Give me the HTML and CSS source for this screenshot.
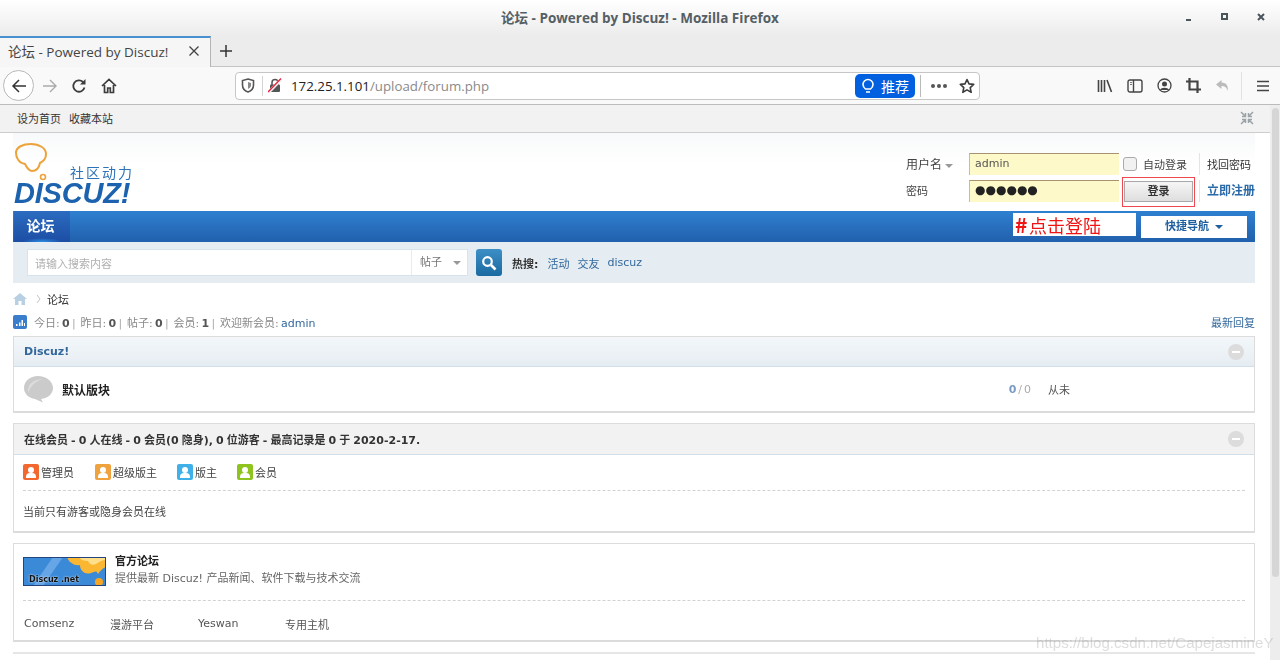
FILE: index.html
```html
<!DOCTYPE html>
<html lang="zh-CN">
<head>
    <meta charset="UTF-8">
    <title>论坛 - Powered by Discuz!</title>
    <link rel="stylesheet" href="styles.css">
</head>
<body>

<div class="titlebar">
    <span class="window-title">论坛 - Powered by Discuz! - Mozilla Firefox</span>
    <div class="window-buttons">
        <svg width="10" height="10" viewBox="0 0 10 10"><path d="M2 8h5" stroke="#4a555c" stroke-width="2"/></svg>
        <svg width="10" height="10" viewBox="0 0 10 10"><rect x="2" y="2" width="5" height="5" fill="none" stroke="#4a555c" stroke-width="2"/></svg>
        <svg width="10" height="10" viewBox="0 0 10 10"><path d="M2 2l6 6M8 2l-6 6" stroke="#4a555c" stroke-width="2"/></svg>
    </div>
</div>

<div class="tabbar">
    <div class="tab">
        <span class="tab-title">论坛 - Powered by Discuz!</span>
        <svg width="12" height="12" viewBox="0 0 12 12"><path d="M1.5 1.5l9 9M10.5 1.5l-9 9" stroke="#444" stroke-width="1.3"/></svg>
    </div>
    <svg class="new-tab" width="14" height="14" viewBox="0 0 14 14"><path d="M7 1v12M1 7h12" stroke="#333" stroke-width="1.5"/></svg>
</div>

<div class="toolbar">
    <div class="back-btn">
        <svg width="18" height="18" viewBox="0 0 18 18"><path d="M16 9H3M9 3L3 9l6 6" fill="none" stroke="#333" stroke-width="1.5"/></svg>
    </div>
    <svg class="nav-icon forward" width="18" height="18" viewBox="0 0 18 18"><path d="M2 9h13M9 3l6 6-6 6" fill="none" stroke="#aaa" stroke-width="1.4"/></svg>
    <svg class="nav-icon reload" width="16" height="16" viewBox="0 0 16 16"><path d="M13.5 9.5A5.7 5.7 0 1 1 12 4" fill="none" stroke="#3c3c3c" stroke-width="1.8"/><path d="M14.5 1v5.5H9z" fill="#3c3c3c"/></svg>
    <svg class="nav-icon home" width="16" height="16" viewBox="0 0 16 16"><path d="M1 8l7-6.500 7 6.500M3.500 7v7.500h3.200V10h2.600v4.500h3.200V7" fill="none" stroke="#3c3c3c" stroke-width="1.7"/></svg>

    <div class="urlbar">
        <svg class="shield" width="14" height="15" viewBox="0 0 14 15"><path d="M7 1l5.500 1.500V7c0 3.500-2.500 6-5.500 7C4 13 1.500 10.500 1.500 7V2.500z" fill="none" stroke="#555" stroke-width="1.6"/><path d="M7 4l3 1v2.500C10 9 8.500 10.200 7 11z" fill="#888"/></svg>
        <span class="url-sep"></span>
        <svg class="lock" width="14" height="15" viewBox="0 0 14 15"><rect x="2" y="6.500" width="10" height="7.500" rx="1" fill="#555"/><path d="M4 7V4.500a3 3 0 0 1 6 0V7" fill="none" stroke="#555" stroke-width="1.500"/><path d="M0.500 14.500L13.500 1" stroke="#f0f0f0" stroke-width="3"/><path d="M0 14L13 0.500" stroke="#e8223c" stroke-width="1.300"/></svg>
        <span class="url-text"><b>172.25.1.101</b>/upload/forum.php</span>
        <div class="suggest">
            <svg width="14" height="16" viewBox="0 0 14 16"><path d="M4.500 11C3 9.800 2 8.500 2 6.500a5 5 0 0 1 10 0c0 2-1 3.300-2.500 4.500zM5 14h4" fill="none" stroke="#fff" stroke-width="1.600"/></svg>
            <span>推荐</span>
        </div>
        <span class="url-sep wide"></span>
        <span class="dots"><i></i><i></i><i></i></span>
        <svg class="star" width="16" height="16" viewBox="0 0 16 16"><path d="M8 1.500l2 4.400 4.700.5-3.500 3.200 1 4.700L8 11.900l-4.200 2.400 1-4.700-3.500-3.200 4.700-.5z" fill="none" stroke="#3c3c3c" stroke-width="1.600" stroke-linejoin="round"/></svg>
    </div>

    <div class="tool-icons">
        <svg width="16" height="14" viewBox="0 0 16 14"><path d="M1.500 1v12M4.500 1v12M7.500 1v12M10 1l4.500 12" stroke="#444" stroke-width="1.600" fill="none"/></svg>
        <svg width="16" height="14" viewBox="0 0 16 14"><rect x="1" y="1" width="14" height="12" rx="2" fill="none" stroke="#444" stroke-width="1.400"/><path d="M6.500 1v12" stroke="#444" stroke-width="1.400"/><path d="M3 3.500h2M3 5.500h2" stroke="#777"/></svg>
        <svg width="15" height="15" viewBox="0 0 15 15"><circle cx="7.500" cy="7.500" r="6.500" fill="none" stroke="#444" stroke-width="1.300"/><circle cx="7.500" cy="6" r="2.500" fill="#444"/><path d="M3 12c1-3 8-3 9 0" fill="#444"/></svg>
        <svg width="15" height="15" viewBox="0 0 15 15"><path d="M3.500 0v11.500H15M0 3.500h11.500V15" fill="none" stroke="#444" stroke-width="2.200"/></svg>
        <svg width="15" height="14" viewBox="0 0 15 14"><path d="M6.500 1L1 5.500 6.500 10V7c3 0 5 1 6 5 1-5-1-8.500-6-8.500z" fill="#bbb"/></svg>
        <span class="tool-sep"></span>
        <svg width="14" height="12" viewBox="0 0 14 12"><path d="M1 1.500h12M1 6h12M1 10.500h12" stroke="#444" stroke-width="1.500"/></svg>
    </div>
</div>

<div class="viewport">
    <div class="page">
        <div class="topbar">
            <span>设为首页</span>
            <span>收藏本站</span>
            <svg class="collapse" width="14" height="14" viewBox="0 0 14 14"><path d="M1 1l4.500 4.500M5.500 2v3.500H2M13 1L8.500 5.500M8.500 2v3.500H12M1 13l4.500-4.500M5.500 12V8.500H2M13 13L8.500 8.500M8.500 12V8.500H12" fill="none" stroke="#9aa4a8" stroke-width="1.500"/></svg>
        </div>

        <div class="wrap">
            <div class="header">
                <div class="logo">
                    <svg class="logo-bubble" width="34" height="38" viewBox="0 0 34 38"><path d="M10 21C4 20 1 15 1 10 1 4 8 1 16 1c8 0 15 4 15 10 0 4-2 7-6 9-1 5-4 8-8 8-3 0-5-3-7-7z" fill="none" stroke="#eda33c" stroke-width="2"/><circle cx="28" cy="34" r="2.500" fill="none" stroke="#eda33c" stroke-width="1.600"/></svg>
                    <span class="logo-slogan">社区动力</span>
                    <span class="logo-name">DISCUZ!</span>
                </div>
                <div class="login">
                    <span class="login-label">用户名 <i class="caret gray"></i></span>
                    <div class="login-input">admin</div>
                    <label class="auto-login"><i class="checkbox"></i>自动登录</label>
                    <span class="login-link">找回密码</span>
                    <span class="login-label pw">密码</span>
                    <div class="login-input dots-input">●●●●●●</div>
                    <div class="login-btn-cell"><span class="login-btn">登录</span></div>
                    <span class="login-link reg">立即注册</span>
                </div>
            </div>

            <div class="nav">
                <span class="nav-active">论坛</span>
                <span class="quick-nav">快捷导航 <i class="caret blue"></i></span>
            </div>

            <div class="search">
                <div class="search-box">
                    <span class="search-hint">请输入搜索内容</span>
                    <span class="search-type">帖子 <i class="caret gray"></i></span>
                </div>
                <div class="search-btn">
                    <svg width="16" height="16" viewBox="0 0 16 16"><circle cx="6.500" cy="6.500" r="4.300" fill="none" stroke="#fff" stroke-width="2.200"/><path d="M10 10l4.500 4.500" stroke="#fff" stroke-width="2.600"/></svg>
                </div>
                <b class="hot">热搜:</b>
                <a>活动</a>
                <a>交友</a>
                <a>discuz</a>
            </div>

            <div class="crumb">
                <svg width="14" height="12" viewBox="0 0 14 12"><path d="M7 0L0 6h2v6h3.500V8h3v4H12V6h2z" fill="#b9d0e2"/></svg>
                <svg class="crumb-sep" width="5" height="10" viewBox="0 0 5 10"><path d="M1 1l3 4-3 4" fill="none" stroke="#c4c4c4"/></svg>
                <span>论坛</span>
            </div>

            <div class="stats">
                <svg width="14" height="14" viewBox="0 0 14 14"><rect width="14" height="14" rx="2" fill="#3a7ecb"/><path d="M3 9h1.500v2H3zM6 7.500h1.500V11H6zM8.500 5H10v6H8.500zM11 8h1v3h-1z" fill="#fff"/></svg>
                <span class="stats-text">今日: <b>0</b> <i>|</i> 昨日: <b>0</b> <i>|</i> 帖子: <b>0</b> <i>|</i> 会员: <b>1</b> <i>|</i> 欢迎新会员: <a>admin</a></span>
                <a class="latest">最新回复</a>
            </div>

            <div class="card forums">
                <div class="card-head blue-head">
                    <span class="forum-cat">Discuz!</span>
                    <i class="fold"></i>
                </div>
                <div class="forum-row">
                    <svg width="31" height="28" viewBox="0 0 31 28"><path d="M15 1C7 1 1 6 1 13c0 6 5 10 11 11l8 3.500-2-3.500c7-1 12-5 12-11C30 6 23 1 15 1z" fill="#cbcbcb"/><path d="M5 18C4 9 11 4 20 4 13 6 8 10 5 18z" fill="#dcdcdc"/></svg>
                    <b class="forum-name">默认版块</b>
                    <span class="forum-count"><em>0</em> / 0</span>
                    <span class="forum-last">从未</span>
                </div>
            </div>

            <div class="card online">
                <div class="card-head gray-head">
                    <b class="online-title">在线会员 - 0 人在线 - 0 会员(0 隐身), 0 位游客 - 最高记录是 0 于 2020-2-17.</b>
                    <i class="fold"></i>
                </div>
                <div class="online-body">
                    <div class="legend">
                        <span class="legend-item w72"><i class="user-icon red"></i>管理员</span>
                        <span class="legend-item w82"><i class="user-icon orange"></i>超级版主</span>
                        <span class="legend-item w60"><i class="user-icon sky"></i>版主</span>
                        <span class="legend-item"><i class="user-icon green"></i>会员</span>
                    </div>
                    <p class="online-note">当前只有游客或隐身会员在线</p>
                </div>
            </div>

            <div class="card friends">
                <div class="friend-main">
                    <div class="friend-logo">
                        <svg width="83" height="29" viewBox="0 0 83 29"><rect width="83" height="29" fill="#3b8ad8"/><path d="M10 29L30 0h10L20 29z" fill="#66a5e6"/><path d="M44 0c2 6 8 9 13 8 0 6 5 10 11 8 4-1 5-3 7 1 2-3 5-6 8-7V0z" fill="#fbb731"/><path d="M56 0c2 3 5 4 9 4 1 3 5 5 8 3 3-2 6-4 10-4V0z" fill="#ffdf8a"/><circle cx="76" cy="25" r="4" fill="#f6a623"/><rect x="0.500" y="0.500" width="82" height="28" fill="none" stroke="#21457c"/></svg>
                        <span class="friend-logo-text">Discuz .net</span>
                    </div>
                    <div class="friend-info">
                        <b>官方论坛</b>
                        <span>提供最新 Discuz! 产品新闻、软件下载与技术交流</span>
                    </div>
                </div>
                <div class="friend-links">
                    <span class="fl1">Comsenz</span>
                    <span class="fl2">漫游平台</span>
                    <span class="fl3">Yeswan</span>
                    <span>专用主机</span>
                </div>
            </div>

            <div class="footer-line"></div>
        </div>
    </div>
    <div class="scrollbar"><div class="thumb"></div></div>
</div>

<!-- annotations added on top of the screenshot -->
<div class="mark-box"></div>
<div class="mark-label"><b>#</b>点击登陆</div>
<div class="watermark">https://blog.csdn.net/CapejasmineY</div>

</body>
</html>
```

FILE: styles.css
```css
* {
    box-sizing: border-box;
}
html, body {
    margin: 0;
    height: 660px;
    overflow: hidden;
}
body {
    position: relative;
    font-family: "DejaVu Sans", "Noto Sans CJK SC", sans-serif;
    font-size: 11px;
    color: #444;
    background: #fff;
    filter: blur(0.35px);
}
a {
    color: #33689c;
}
i, em {
    font-style: normal;
}

/* browser chrome */
.titlebar {
    position: relative;
    height: 36px;
    padding-bottom: 2px;
    display: flex;
    align-items: center;
    justify-content: center;
    background: linear-gradient(#fff, #ececec);
}
.window-title {
    font-family: "Open Sans", "Noto Sans CJK SC", sans-serif;
    font-size: 13.5px;
    font-weight: 700;
    color: #555f66;
}
.window-buttons {
    position: absolute;
    right: 14px;
    top: 12px;
    display: flex;
    gap: 26px;
}
.tabbar {
    height: 31px;
    display: flex;
    align-items: center;
    background: #ececec;
    border-bottom: 1px solid #c4c4c4;
}
.tab {
    width: 211px;
    height: 31px;
    padding: 0 10px 2px 8px;
    display: flex;
    align-items: center;
    justify-content: space-between;
    background: #f6f6f6;
    border-top: 2px solid #4a8fd0;
    border-right: 1px solid #b4b4b4;
}
.tab-title {
    font-family: "Open Sans", "Noto Sans CJK SC", sans-serif;
    font-size: 13.5px;
    color: #444;
}
.new-tab {
    margin-left: 8px;
}
.toolbar {
    height: 38px;
    display: flex;
    align-items: center;
    background: #f9f9f9;
    border-bottom: 1px solid #bcbcbc;
}
.back-btn {
    flex: none;
    width: 31px;
    height: 31px;
    margin-left: 3px;
    display: flex;
    align-items: center;
    justify-content: center;
    background: #fff;
    border: 1px solid #b8b8b8;
    border-radius: 50%;
}
.nav-icon {
    flex: none;
}
.nav-icon.forward {
    margin-left: 7px;
}
.nav-icon.reload {
    margin-left: 12px;
}
.nav-icon.home {
    margin-left: 14px;
}
.urlbar {
    flex: none;
    width: 745px;
    height: 28px;
    margin-left: 118px;
    padding: 0 4px 0 5px;
    display: flex;
    align-items: center;
    background: #fff;
    border: 1px solid #c6c6c6;
    border-radius: 4px;
}
.shield {
    flex: none;
}
.url-sep {
    width: 1px;
    height: 20px;
    margin: 0 5px 0 7px;
    background: #d4d4d4;
}
.lock {
    flex: none;
}
.url-text {
    flex: 1;
    margin-left: 9px;
    font-family: "Open Sans", sans-serif;
    font-size: 13.3px;
    color: #8a8a8a;
}
.url-text b {
    font-weight: 400;
    color: #222;
}
.suggest {
    width: 60px;
    height: 24px;
    display: flex;
    align-items: center;
    justify-content: center;
    gap: 6px;
    font-family: "Noto Sans CJK SC", sans-serif;
    font-size: 14px;
    color: #fff;
    background: #0060df;
    border-radius: 5px;
}
.url-sep.wide {
    height: 22px;
    margin: 0 10px 0 5px;
    background: #bbb;
}
.dots {
    display: flex;
    gap: 2px;
}
.dots i {
    width: 4px;
    height: 4px;
    border-radius: 50%;
    background: #555;
}
.star {
    margin-left: 12px;
}
.tool-icons {
    flex: none;
    margin-left: 117px;
    display: flex;
    align-items: center;
    gap: 14px;
}
.tool-sep {
    width: 1px;
    height: 28px;
    margin: 0 0 0 -3px;
    background: #e2e2e2;
}

.viewport {
    height: 555px;
    display: flex;
}
.page {
    flex: 1;
    overflow: hidden;
}
.scrollbar {
    width: 10px;
    padding: 3px 2px 0;
    background: #ededed;
}
.thumb {
    height: 469px;
    width: 7px;
    background: #d6d6d6;
    border-radius: 4px;
}

/* discuz page */
.topbar {
    height: 28px;
    padding: 0 0 2px 17px;
    display: flex;
    align-items: center;
    gap: 8px;
    background: #f2f2f2;
    border-bottom: 1px solid #cdcdcd;
    color: #333;
}
.collapse {
    margin-left: auto;
    margin-right: 16px;
}
.wrap {
    width: 1242px;
    margin-left: 13px;
}
.header {
    height: 78px;
    display: flex;
    justify-content: space-between;
    background: linear-gradient(#f7f9fa, #fff 40%);
}
.logo {
    position: relative;
    width: 130px;
}
.logo-bubble {
    position: absolute;
    left: 2px;
    top: 10px;
}
.logo-slogan {
    position: absolute;
    left: 57px;
    top: 32px;
    font-family: "Noto Sans CJK SC", sans-serif;
    font-size: 14px;
    line-height: 14px;
    letter-spacing: 2px;
    color: #2e72b8;
}
.logo-name {
    position: absolute;
    left: 1px;
    top: 46px;
    font-family: "Liberation Sans", sans-serif;
    font-size: 29px;
    line-height: 1;
    font-weight: 700;
    font-style: italic;
    letter-spacing: -0.2px;
    color: #1c62ae;
}
.login {
    width: 349px;
    margin-top: 20px;
    display: grid;
    grid-template-columns: 63px 150px 80px 56px;
    grid-template-rows: 22px 22px;
    row-gap: 5px;
    align-items: center;
    color: #444;
}
.login-label {
    margin-top: -1px;
    font-size: 12px;
    font-family: "Noto Sans CJK SC", sans-serif;
}
.login-label.pw {
    margin-top: -3px;
    font-size: 11px;
}
.login-input {
    height: 22px;
    padding-left: 5px;
    line-height: 20px;
    background: #fdf9c8;
    border-top: 1px solid #a5946f;
    border-left: 1px solid #c9bd92;
    color: #555;
}
.dots-input {
    font-size: 12px;
    line-height: 18px;
    color: #222;
}
.auto-login {
    display: flex;
    align-items: center;
    gap: 6px;
    padding-left: 4px;
}
.checkbox {
    width: 14px;
    height: 14px;
    background: #f1f1f1;
    border: 1px solid #aaa;
    border-radius: 3px;
}
.login-link {
    padding-left: 7px;
    height: 22px;
    line-height: 25px;
    color: #333;
    border-left: 1px solid #e4e4e4;
}
.login-btn-cell {
    padding-left: 5px;
}
.login-btn {
    display: block;
    width: 69px;
    height: 21px;
    line-height: 20px;
    text-align: center;
    font-weight: 700;
    color: #333;
    background: linear-gradient(#f6f6f6, #dedede);
    border: 1px solid #a8a8a8;
}
.login-link.reg {
    line-height: 22px;
    font-size: 12px;
    font-weight: 700;
    color: #2a6aa8;
    white-space: nowrap;
}
.caret {
    display: inline-block;
    width: 0;
    height: 0;
    vertical-align: middle;
    border-left: 4px solid transparent;
    border-right: 4px solid transparent;
    border-top: 4px solid #999;
}
.caret.blue {
    border-top-color: #1f5f9e;
    margin-left: 2px;
}
.nav {
    height: 31px;
    display: flex;
    justify-content: space-between;
    align-items: center;
    background: linear-gradient(#2f80d1, #2160ac);
}
.nav-active {
    width: 56px;
    height: 31px;
    line-height: 28px;
    margin-left: 1px;
    padding-right: 3px;
    text-align: center;
    font-family: "Noto Sans CJK SC", sans-serif;
    font-size: 14px;
    font-weight: 700;
    color: #fff;
    background: radial-gradient(ellipse 20px 4px at 50% 100%, #2d90e6, transparent), linear-gradient(#2b6cc0, #1c4ea4);
}
.quick-nav {
    width: 106px;
    height: 22px;
    margin-right: 8px;
    line-height: 22px;
    text-align: center;
    font-weight: 700;
    color: #1f5f9e;
    background: #fff;
}
.search {
    height: 41px;
    padding-left: 14px;
    display: flex;
    align-items: center;
    background: #e5edf2;
}
.search-box {
    width: 441px;
    height: 27px;
    display: flex;
    align-items: center;
    justify-content: space-between;
    background: #fff;
    border: 1px solid #d8e3eb;
}
.search-hint {
    padding-left: 7px;
    color: #b0b0b0;
}
.search-type {
    width: 56px;
    height: 25px;
    line-height: 25px;
    padding-left: 8px;
    color: #777;
    border-left: 1px solid #e6edf2;
}
.search-type .caret {
    margin-left: 7px;
}
.search-btn {
    width: 26px;
    height: 27px;
    margin: 0 10px 0 8px;
    display: flex;
    align-items: center;
    justify-content: center;
    background: linear-gradient(#3c8fc6, #1b6aa2);
    border-radius: 3px;
}
.hot {
    margin-right: 9px;
    color: #333;
}
.search a {
    margin-right: 8px;
}
.crumb {
    height: 32px;
    display: flex;
    align-items: center;
    color: #333;
}
.crumb-sep {
    margin: 0 6px 0 9px;
}
.stats {
    height: 14px;
    display: flex;
    align-items: center;
}
.stats-text {
    margin-left: 7px;
    color: #888;
    word-spacing: -1.2px;
}
.stats-text b {
    color: #555;
}
.stats-text i {
    margin-right: 2.5px;
    color: #aaa;
}
.latest {
    margin-left: auto;
}
.card {
    margin-top: 10px;
    background: #fff;
    border: 1px solid #dcdcdc;
    border-bottom-width: 2px;
}
.forums {
    margin-top: 7px;
    height: 77px;
}
.card-head {
    height: 30px;
    padding: 0 10px;
    display: flex;
    align-items: center;
    justify-content: space-between;
}
.blue-head {
    background: linear-gradient(#f3f7fa, #e6edf2);
    border-bottom: 1px solid #d0dfea;
}
.gray-head {
    height: 31px;
    background: #f2f2f2;
    border-bottom: 1px solid #d0dfea;
}
.forum-cat {
    font-weight: 700;
    color: #33689c;
}
.online-title {
    color: #333;
    word-spacing: -0.75px;
}
.fold {
    position: relative;
    width: 16px;
    height: 16px;
    background: #dcdcdc;
    border-radius: 50%;
}
.fold::after {
    content: "";
    position: absolute;
    left: 4px;
    top: 7px;
    width: 8px;
    height: 2px;
    background: #fff;
}
.forum-row {
    height: 44px;
    padding-left: 9px;
    display: flex;
    align-items: center;
}
.forum-name {
    margin-left: 8px;
    font-size: 12px;
    color: #222;
}
.forum-count {
    margin-left: auto;
    color: #aaa;
    word-spacing: -1.5px;
}
.forum-count em {
    font-weight: 700;
    color: #7a9cc4;
}
.forum-last {
    width: 206px;
    margin-left: 17px;
    color: #555;
}
.online {
    height: 110px;
}
.online-body {
    padding: 0 9px;
}
.legend {
    height: 36px;
    padding-bottom: 2px;
    display: flex;
    align-items: center;
    border-bottom: 1px dashed #d2d2d2;
}
.legend-item {
    display: flex;
    align-items: center;
    gap: 2px;
}
.w72 {
    width: 72px;
}
.w82 {
    width: 82px;
}
.w60 {
    width: 60px;
}
.user-icon {
    position: relative;
    width: 16px;
    height: 16px;
    overflow: hidden;
    border-radius: 2px;
}
.user-icon::before {
    content: "";
    position: absolute;
    left: 5px;
    top: 3px;
    width: 6px;
    height: 6px;
    background: #fff;
    border-radius: 50%;
}
.user-icon::after {
    content: "";
    position: absolute;
    left: 3px;
    top: 9px;
    width: 10px;
    height: 5px;
    background: #fff;
    border-radius: 4px 4px 0 0;
}
.red {
    background: #f2682f;
}
.orange {
    background: #f0a23e;
}
.sky {
    background: #3fb0e8;
}
.green {
    background: #8fc31f;
}
.online-note {
    margin: 12px 0 0;
    color: #444;
}
.friends {
    height: 99px;
    padding: 0 9px;
}
.friend-main {
    height: 57px;
    display: flex;
    align-items: center;
    padding-bottom: 1px;
    border-bottom: 1px dashed #d2d2d2;
}
.friend-logo {
    position: relative;
    width: 83px;
    height: 29px;
}
.friend-logo svg {
    display: block;
}
.friend-logo-text {
    position: absolute;
    left: 6px;
    bottom: 2px;
    font-size: 8px;
    font-weight: 700;
    color: #111;
    text-shadow: 0 0 2px #fff;
    white-space: nowrap;
}
.friend-info {
    margin: 0 0 3px 9px;
    display: flex;
    flex-direction: column;
    gap: 2px;
    line-height: 15px;
}
.friend-info b {
    color: #222;
}
.friend-info span {
    color: #666;
}
.friend-links {
    height: 42px;
    padding: 3px 0 0 1px;
    display: flex;
    align-items: center;
    color: #555;
}
.fl1 {
    width: 86px;
}
.fl2 {
    width: 88px;
}
.fl3 {
    width: 87px;
}
.footer-line {
    height: 2px;
    margin-top: 10px;
    background: #e6e6e6;
}

/* annotations */
.mark-box {
    position: absolute;
    left: 1122px;
    top: 177px;
    width: 73px;
    height: 30px;
    border: 1px solid #f0484c;
}
.mark-label {
    position: absolute;
    left: 1013px;
    top: 213px;
    width: 123px;
    height: 23px;
    padding-left: 2px;
    line-height: 23px;
    font-family: "Noto Sans CJK SC", sans-serif;
    font-size: 18px;
    color: #f01414;
    background: #fff;
}
.mark-label b {
    display: inline-block;
    width: 14px;
    font-size: 21px;
}
.watermark {
    position: absolute;
    left: 1036px;
    top: 634px;
    font-family: "Liberation Sans", sans-serif;
    font-size: 15.100px;
    color: rgba(150, 150, 150, 0.32);
    white-space: nowrap;
}
```
